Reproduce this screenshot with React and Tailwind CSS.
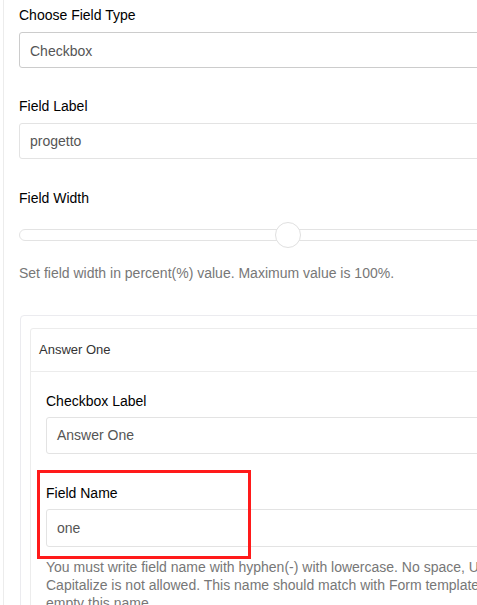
import React from 'react';

const Label = ({ children }) => (
  <p className="text-[14px] leading-[20px] text-black">{children}</p>
);

const Input = ({ value, className = '' }) => (
  <div className={`mt-[7px] h-[36px] flex items-center px-[10px] bg-white border rounded-[3px] text-[14px] text-[#555] ${className}`}>
    {value}
  </div>
);

const App = () => {
  return (
    <div className="relative w-[477px] h-[605px] overflow-hidden bg-white font-['Liberation_Sans',Arial,sans-serif]">
      <div className="ml-[3px] border-l border-[#ececec] min-h-[605px] w-[640px] pl-[15px] pt-[5px]">
        {/* field type */}
        <Label>Choose Field Type</Label>
        <Input value="Checkbox" className="border-[#cccccc] pt-[2px]" />

        <div className="mt-[28px]">
          <Label>Field Label</Label>
          <Input value="progetto" className="border-[#e3e3e3]" />
        </div>

        {/* width slider */}
        <div className="mt-[29px]">
          <Label>Field Width</Label>
          <div className="relative mt-[14px] h-[26px] flex items-center">
            <div className="w-full h-[12px] rounded-full border border-[#e3e3e3] bg-white" />
            <div className="absolute left-[256px] top-0 w-[26px] h-[26px] rounded-full border border-[#e0e0e0] bg-white" />
          </div>
          <p className="mt-[15px] text-[14px] leading-[20px] text-[#777]">
            Set field width in percent(%) value. Maximum value is 100%.
          </p>
        </div>

        {/* options */}
        <div className="mt-[32px] ml-[1px] border border-[#ebebef] rounded-[4px] pt-[12px] pl-[9px] pb-4">
          <div className="border border-[#ececec] rounded-[3px]">
            <div className="h-[43px] flex items-center pl-[8px] text-[13px] text-[#333] border-b border-[#ececec]">
              Answer One
            </div>
            <div className="px-[15px] pt-[19px] pb-4">
              <Label>Checkbox Label</Label>
              <div className="mt-[-1px]">
                <Input value="Answer One" className="border-[#e3e3e3] h-[37px]" />
              </div>

              <div className="mt-[29px]">
                <Label>Field Name</Label>
                <div className="mt-[-1px]">
                  <Input value="one" className="border-[#e3e3e3] h-[38px]" />
                </div>
                <p className="mt-[11px] w-[540px] text-[14px] leading-[18px] text-[#777]">
                  You must write field name with hyphen(-) with lowercase. No space, UPPERCASE,
                  Capitalize is not allowed. This name should match with Form template name. Do not
                  empty this name.
                </p>
              </div>
            </div>
          </div>
        </div>
      </div>

      {/* highlight annotation */}
      <div className="absolute left-[37px] top-[470px] w-[214px] h-[89px] border-[3px] border-[#ff1a1a] pointer-events-none" />
    </div>
  );
};

export default App;
